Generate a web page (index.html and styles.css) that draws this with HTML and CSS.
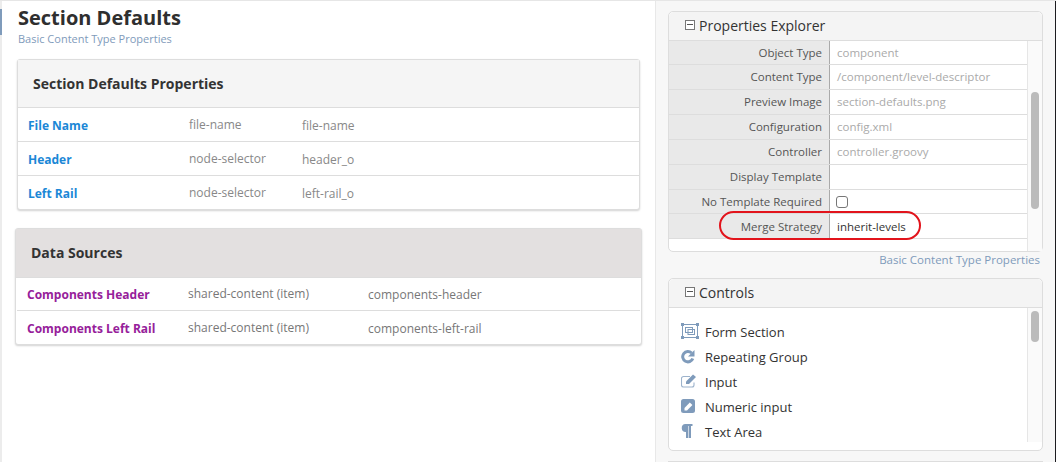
FILE: index.html
```html
<!DOCTYPE html>
<html lang="en">
<head>
    <meta charset="UTF-8">
    <title>Section Defaults</title>
    <link rel="stylesheet" href="styles.css">
</head>
<body>
    <div class="page">
        <div class="left-pane">
            <div class="marker"></div>
            <div class="heading">
                <h1>Section Defaults</h1>
                <p>Basic Content Type Properties</p>
            </div>

            <div class="card card-props">
                <h2>Section Defaults Properties</h2>
                <div class="row">
                    <span class="name">File Name</span>
                    <span class="kind">file-name</span>
                    <span class="var">file-name</span>
                </div>
                <div class="row">
                    <span class="name">Header</span>
                    <span class="kind">node-selector</span>
                    <span class="var">header_o</span>
                </div>
                <div class="row">
                    <span class="name">Left Rail</span>
                    <span class="kind">node-selector</span>
                    <span class="var">left-rail_o</span>
                </div>
            </div>

            <div class="card card-sources">
                <h2>Data Sources</h2>
                <div class="row">
                    <span class="name">Components Header</span>
                    <span class="kind">shared-content (item)</span>
                    <span class="var">components-header</span>
                </div>
                <div class="row">
                    <span class="name">Components Left Rail</span>
                    <span class="kind">shared-content (item)</span>
                    <span class="var">components-left-rail</span>
                </div>
            </div>
        </div>

        <div class="right-pane">
            <div class="panel panel-explorer">
                <div class="panel-title"><span class="toggle"></span>Properties Explorer</div>
                <div class="panel-body">
                    <div class="prop"><label>Object Type</label><span>component</span></div>
                    <div class="prop"><label>Content Type</label><span>/component/level-descriptor</span></div>
                    <div class="prop"><label>Preview Image</label><span>section-defaults.png</span></div>
                    <div class="prop"><label>Configuration</label><span>config.xml</span></div>
                    <div class="prop"><label>Controller</label><span>controller.groovy</span></div>
                    <div class="prop"><label>Display Template</label><span></span></div>
                    <div class="prop prop-check"><label>No Template Required</label><span><i class="check"></i></span></div>
                    <div class="prop prop-merge"><label>Merge Strategy</label><span>inherit-levels</span><b class="callout"></b></div>
                    <div class="track"><div class="thumb"></div></div>
                </div>
            </div>
            <div class="panel-link">Basic Content Type Properties</div>

            <div class="panel panel-controls">
                <div class="panel-title"><span class="toggle"></span>Controls</div>
                <div class="panel-body">
                    <ul class="controls">
                        <li>
                            <svg viewBox="0 0 18 18" width="18" height="18"><g fill="none" stroke="#7f9bbb"><rect x="1.5" y="1.5" width="15" height="13"/><rect x="4.5" y="4.5" width="7" height="5"/><rect x="7" y="6.5" width="6.5" height="5"/></g><g fill="#7f9bbb"><rect width="3" height="3"/><rect x="15" width="3" height="3"/><rect y="13" width="3" height="3"/><rect x="15" y="13" width="3" height="3"/></g></svg>
                            Form Section
                        </li>
                        <li>
                            <svg viewBox="0 0 18 18" width="18" height="18"><path d="M10.6 5A5.2 5.2 0 1 0 11.8 10.4" fill="none" stroke="#7f9bbb" stroke-width="3"/><path d="M13.5 2v6.5H7z" fill="#7f9bbb"/></svg>
                            Repeating Group
                        </li>
                        <li>
                            <svg viewBox="0 0 18 18" width="18" height="18"><path d="M13 9.5V12a2 2 0 0 1-2 2H2.5a2 2 0 0 1-2-2V5.5a2 2 0 0 1 2-2H9" fill="none" stroke="#9db3cc" stroke-width="1.1"/><path d="M5 8.5 12 1.5 15 4l-7 7H5z" fill="#7f9bbb"/></svg>
                            Input
                        </li>
                        <li>
                            <svg viewBox="0 0 18 18" width="18" height="18"><rect y="1" width="14" height="14" rx="2.5" fill="#7f9bbb"/><path d="M3.5 12.5V10L8.8 4.6l2.6 2.5-5.4 5.4z" fill="#fff"/></svg>
                            Numeric input
                        </li>
                        <li>
                            <svg viewBox="0 0 18 18" width="18" height="18"><path d="M4.5 1H11.5v2H10v12H7.8V3h-.6v12H5V9A4 4 0 0 1 4.5 1z" fill="#7f9bbb"/></svg>
                            Text Area
                        </li>
                    </ul>
                    <div class="track track-short"><div class="thumb"></div></div>
                </div>
            </div>
            <div class="panel-next"></div>
        </div>
    </div>
</body>
</html>
```

FILE: styles.css
```css
* { box-sizing: border-box; }

html, body {
    margin: 0;
    height: 462px;
    overflow: hidden;
}

body {
    font-family: "Open Sans", sans-serif;
    font-size: 12px;
    color: #333;
    background: #fff;
}

.page {
    display: flex;
    height: 462px;
    border-top: 1px solid #e6e6e6;
}

/* left side */
.left-pane {
    position: relative;
    width: 655px;
    padding: 0 15px;
    border-left: 2px solid #ececec;
    background: #fff;
}

.marker {
    position: absolute;
    left: -2px;
    top: 8px;
    width: 2px;
    height: 26px;
    background: #7f9bbb;
}

.heading {
    padding-left: 1px;
    height: 58px;
}

.heading h1 {
    margin: 0;
    padding-top: 2px;
    font-size: 20px;
    line-height: 29px;
    font-weight: 700;
    color: #2f2f2f;
}

.heading p {
    margin: 0;
    font-size: 11px;
    line-height: 14px;
    color: #7f9bbb;
}

.card {
    border: 1px solid #ddd;
    border-radius: 3px;
    background: #fff;
    box-shadow: 0 1px 2px rgba(0, 0, 0, 0.18);
}

.card h2 {
    margin: 0;
    font-size: 14px;
    font-weight: 700;
    color: #333;
    border-bottom: 1px solid #ddd;
    line-height: 47px;
}

.card-props h2 {
    height: 48px;
    padding-left: 15px;
    background: #f5f5f5;
}

.card-sources {
    margin: 18px -2px 0;
}

.card-sources h2 {
    height: 49px;
    line-height: 48px;
    padding-left: 15px;
    background: #e3e0e0;
}

.row {
    display: flex;
    align-items: center;
    height: 34px;
    border-top: 1px solid #ddd;
    color: #888;
}

.card h2 + .row { border-top: 0; height: 33px; }

.name { font-weight: 700; }

.card-props .name { width: 171px; padding: 2px 0 0 10px; color: #1b87d6; }
.card-props .kind { width: 113px; }
.card-props .var { padding-top: 2px; }

.card-sources .row { color: #777; margin: 0 1px; }
.card-sources h2 + .row { height: 32px; }
.card-sources .name { width: 171px; padding-left: 10px; color: #96209a; }
.card-sources .kind { width: 180px; }
.card-sources .row + .row .name,
.card-sources .row + .row .var { padding-top: 2px; }
.card-sources h2 + .row .kind { padding-bottom: 2px; }

/* right side */
.right-pane {
    flex: 1;
    padding: 10px 12px 0 12px;
    background: #f7f7f7;
    border-left: 1px solid #e8e8e8;
    border-right: 1px solid #1c1c20;
}

.panel {
    border: 1px solid #ddd;
    border-radius: 5px;
    background: #fff;
}

.panel-title {
    display: flex;
    align-items: center;
    height: 29px;
    padding: 0 0 2px 16px;
    font-size: 14px;
    color: #333;
    background: #f4f4f4;
    border-bottom: 1px solid #ddd;
    border-radius: 5px 5px 0 0;
}

.toggle {
    position: relative;
    width: 10px;
    height: 10px;
    margin-right: 4px;
    border: 1px solid #777;
    background: #fff;
}

.toggle::after {
    content: "";
    position: absolute;
    left: 1px;
    right: 1px;
    top: 3px;
    height: 1px;
    background: #555;
}

.panel-body {
    position: relative;
    overflow: hidden;
}

.panel-explorer .panel-body { height: 210px; }

.prop {
    position: relative;
    display: flex;
    width: 358px;
    height: 25px;
    border-bottom: 1px solid #ddd;
    font-size: 11.5px;
    line-height: 23px;
}

.prop:first-child,
.prop-check { height: 24px; }

.prop-merge { line-height: 25px; }

.prop label {
    width: 161px;
    padding-right: 7px;
    text-align: right;
    color: #555;
    background: #e9e9e9;
    border-right: 1px solid #aaa;
}

.prop span {
    padding-left: 7px;
    color: #aaa;
}

.prop-merge span { color: #333; }

.check {
    display: block;
    width: 12px;
    height: 12px;
    margin: 6px 0 0 -1px;
    border: 1px solid #777;
    border-radius: 3px;
    background: #fff;
}

.callout {
    position: absolute;
    left: 50px;
    top: -3px;
    width: 202px;
    height: 29px;
    border: 2px solid #e2141c;
    border-radius: 15px;
}

.track {
    position: absolute;
    top: 0;
    right: 0;
    bottom: 0;
    width: 15px;
    background: #fafafa;
    border-left: 1px solid #e6e6e6;
}

.thumb {
    position: absolute;
    left: 3px;
    top: 51px;
    width: 8px;
    height: 117px;
    border-radius: 4px;
    background: #bbb;
}

.panel-link {
    height: 26px;
    text-align: right;
    padding-right: 3px;
    font-size: 11.5px;
    line-height: 15px;
    color: #7f9bbb;
}

.panel-controls .panel-body { height: 142px; }

.controls {
    list-style: none;
    margin: 0;
    padding: 11px 0 0 12px;
}

.controls li {
    display: flex;
    align-items: center;
    gap: 6px;
    height: 25px;
    font-size: 13px;
    color: #333;
}

.track-short { bottom: 8px; }
.track-short .thumb { top: 3px; height: 31px; }

.panel-next {
    height: 1px;
    margin-top: 10px;
    background: #ddd;
}
```
